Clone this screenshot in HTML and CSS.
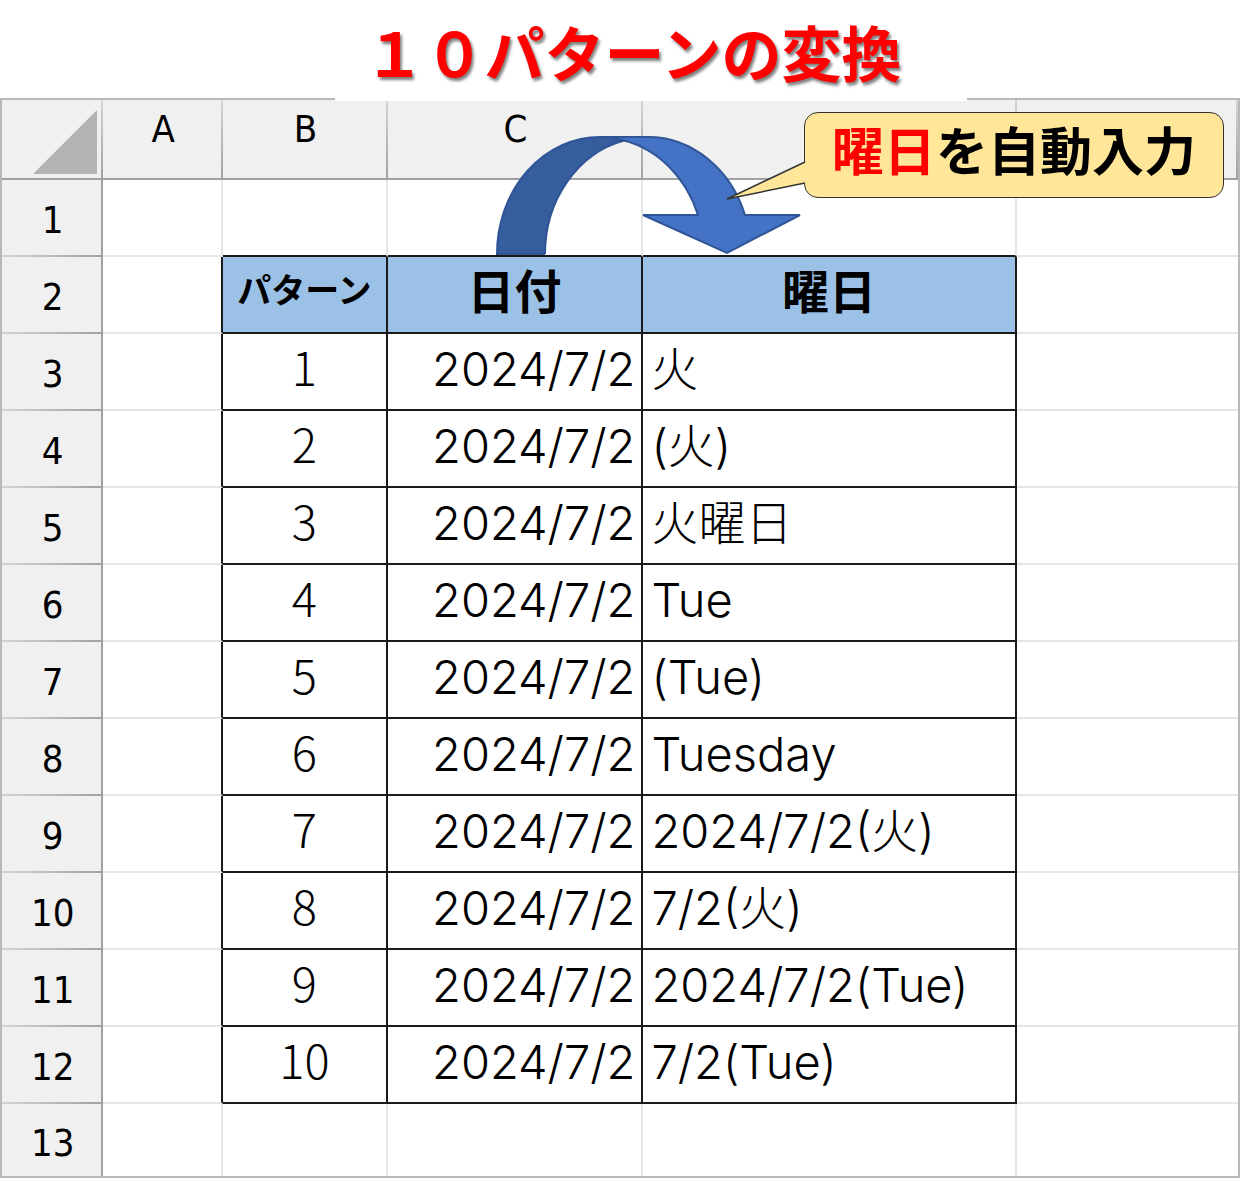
FILE: index.html
```html
<!DOCTYPE html>
<html lang="ja">
<head>
<meta charset="utf-8">
<title>１０パターンの変換</title>
<link rel="stylesheet" href="styles.css">
</head>
<body>
<h1 class="title">１０パターンの変換</h1>
<main class="sheet">
  <table class="grid">
    <colgroup>
      <col class="col-num"><col class="col-a"><col class="col-b"><col class="col-c"><col class="col-d"><col class="col-e">
    </colgroup>
    <thead>
      <tr>
        <td class="corner"><svg class="corner-mark" viewBox="0 0 64 64" aria-hidden="true"><path d="M64 0V64H0Z" fill="#b3b3b3"/></svg></td>
        <th scope="col">A</th><th scope="col">B</th><th scope="col">C</th><td class="blank"></td><td class="blank"></td>
      </tr>
    </thead>
    <tbody>
      <tr><th scope="row">1</th><td></td><td class="above"></td><td class="above"></td><td class="above"></td><td></td></tr>
      <tr class="head"><th scope="row">2</th><td class="before"></td><td class="cell pattern">パターン</td><td class="cell">日付</td><td class="cell">曜日</td><td></td></tr>
      <tr><th scope="row">3</th><td class="before"></td><td class="cell">1</td><td class="cell date">2024/7/2</td><td class="cell day">火</td><td></td></tr>
      <tr><th scope="row">4</th><td class="before"></td><td class="cell">2</td><td class="cell date">2024/7/2</td><td class="cell day">(火)</td><td></td></tr>
      <tr><th scope="row">5</th><td class="before"></td><td class="cell">3</td><td class="cell date">2024/7/2</td><td class="cell day">火曜日</td><td></td></tr>
      <tr><th scope="row">6</th><td class="before"></td><td class="cell">4</td><td class="cell date">2024/7/2</td><td class="cell day">Tue</td><td></td></tr>
      <tr><th scope="row">7</th><td class="before"></td><td class="cell">5</td><td class="cell date">2024/7/2</td><td class="cell day">(Tue)</td><td></td></tr>
      <tr><th scope="row">8</th><td class="before"></td><td class="cell">6</td><td class="cell date">2024/7/2</td><td class="cell day">Tuesday</td><td></td></tr>
      <tr><th scope="row">9</th><td class="before"></td><td class="cell">7</td><td class="cell date">2024/7/2</td><td class="cell day">2024/7/2(火)</td><td></td></tr>
      <tr><th scope="row">10</th><td class="before"></td><td class="cell">8</td><td class="cell date">2024/7/2</td><td class="cell day">7/2(火)</td><td></td></tr>
      <tr><th scope="row">11</th><td class="before"></td><td class="cell">9</td><td class="cell date">2024/7/2</td><td class="cell day">2024/7/2(Tue)</td><td></td></tr>
      <tr><th scope="row">12</th><td class="before"></td><td class="cell">10</td><td class="cell date">2024/7/2</td><td class="cell day">7/2(Tue)</td><td></td></tr>
      <tr class="last"><th scope="row">13</th><td></td><td></td><td></td><td></td><td></td></tr>
    </tbody>
  </table>
  <svg class="arrow" viewBox="490 130 320 130" aria-hidden="true">
    <path d="M497 254A103 117 0 0 1 600 137H648L624 140.500A103 117 0 0 0 545 254Z" fill="#365d9e"/>
    <path d="M600 137H648A103 117 0 0 1 745 215H800L727 253L643 215H698A103 117 0 0 0 600 137Z" fill="#4472c4"/>
    <path d="M600 137A103 117 0 0 1 624 140.500Q612 144 600 150L590 137Z" fill="#365d9e"/>
    <path d="M545 254H497A103 117 0 0 1 600 137H648A103 117 0 0 1 745 215H800L727 253L643 215H698A103 117 0 0 0 624 140.500A103 117 0 0 0 545 254M600 137Q612 137 624 140.500" fill="none" stroke="#2f5597" stroke-width="2"/>
  </svg>
  <div class="callout">
    <svg class="tail" viewBox="0 0 80 42" aria-hidden="true"><path d="M80 3L1 40L80 24Z" fill="#ffe699"/><path d="M79 3L1 40L79 24" fill="none" stroke="#333" stroke-width="1.500"/></svg>
    <span class="accent">曜日</span>を自動入力
  </div>
</main>
</body>
</html>
```
FILE: styles.css
```css
* { box-sizing: border-box; }

body {
  margin: 0;
  background: #fff;
  color: #000;
  font-family: "Noto Sans CJK JP", sans-serif;
}

.title {
  position: relative;
  z-index: 1;
  width: 51%;
  margin: 0 0 -3px 27%;
  padding-right: 36px;
  background: #fff;
  color: #f00;
  font-size: 60px;
  font-weight: 700;
  line-height: 101px;
  text-align: center;
  white-space: nowrap;
  text-shadow: 2px 3px 3px rgba(0, 0, 0, 0.5);
}

.sheet {
  position: relative;
  border: 2px solid #b8b8b8;
}

.grid {
  width: 100%;
  table-layout: fixed;
  border-collapse: separate;
  border-spacing: 0;
}

.col-num { width: 8.2%; }
.col-a { width: 9.7%; }
.col-b { width: 13.3%; }
.col-c { width: 20.7%; }
.col-d { width: 30.2%; }

.grid th,
.grid td {
  height: 77px;
  padding: 0;
  border: solid #e6e6e6;
  border-width: 0 2px 2px 0;
}

.grid th,
.grid .corner,
.grid .blank {
  border: 0;
  background:
    linear-gradient(#a0a0a0, #a0a0a0) bottom / 100% 2px no-repeat,
    linear-gradient(#d4d4d4, #a0a0a0) right / 2px 100% no-repeat,
    #f0f0f0;
  font-family: "DejaVu Sans Condensed", "DejaVu Sans", sans-serif;
  font-size: 38px;
  font-weight: 400;
  line-height: 44px;
}

.grid thead th,
.grid .corner,
.grid .blank { height: 80px; }

.grid thead th { padding-bottom: 22px; }

.grid tbody th {
  padding-top: 2px;
  background:
    linear-gradient(#a0a0a0, #a0a0a0) right / 2px 100% no-repeat,
    linear-gradient(to right, #d4d4d4, #a0a0a0) bottom / 100% 2px no-repeat,
    #f0f0f0;
}

.corner-mark {
  display: block;
  width: 64px;
  margin: 4px 6px 0 auto;
}

.grid tr > :last-child { border-right: 0; }
.grid .before { border-right-color: #1a1a1a; }
.grid .above { border-bottom-color: #1a1a1a; }

.grid .cell {
  border-color: #1a1a1a;
  padding-bottom: 11px;
  font-size: 47px;
  font-weight: 300;
  line-height: 64px;
  text-align: center;
  white-space: nowrap;
}

.grid .date,
.grid .day {
  padding-bottom: 5px;
  font-family: Inter, "Noto Sans CJK JP", sans-serif;
  line-height: 70px;
}

.grid .date {
  padding-right: 6px;
  text-align: right;
}

.grid .day {
  padding-left: 8px;
  text-align: left;
}

.grid .head .cell {
  background: #9bc2e6;
  font-weight: 700;
}

.grid .head .pattern { font-size: 34px; }

.grid .last > * {
  height: 72px;
  border-bottom: 0;
}

.grid .last th {
  padding-top: 6px;
  background:
    linear-gradient(#a0a0a0, #a0a0a0) right / 2px 100% no-repeat,
    #f0f0f0;
}

.arrow {
  position: absolute;
  top: 30px;
  left: 39.5%;
  width: 320px;
  height: 130px;
}

.callout {
  position: absolute;
  top: 12px;
  right: 14px;
  width: 34%;
  padding-bottom: 12px;
  border: 1px solid #333;
  border-radius: 14px;
  background: #ffe699;
  font-size: 52px;
  font-weight: 700;
  line-height: 72px;
  text-align: center;
  white-space: nowrap;
}

.tail {
  position: absolute;
  top: 46px;
  left: -79px;
  width: 80px;
  height: 42px;
}

.accent { color: #f00; }
```
